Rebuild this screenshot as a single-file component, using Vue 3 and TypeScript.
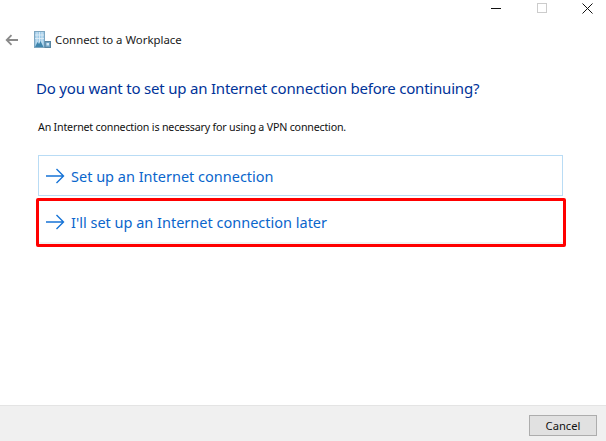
<script setup lang="ts">
const options = [
  { label: 'Set up an Internet connection', marked: false },
  { label: "I'll set up an Internet connection later", marked: true },
]
</script>

<template>
  <div class="window">
    <div class="controls">
      <span class="ctl"><i class="min"></i></span>
      <span class="ctl"><i class="max"></i></span>
      <span class="ctl">
        <svg width="11" height="11" viewBox="0 0 11 11"><path d="M.5.5l10 10M10.500.5l-10 10" stroke="#111" fill="none" /></svg>
      </span>
    </div>

    <div class="nav">
      <svg class="back" width="14" height="12" viewBox="0 0 14 12">
        <path d="M13 6H2M6.500 1.200 1.700 6l4.800 4.800" stroke="#8a8a8a" stroke-width="1.800" fill="none" />
      </svg>
      <svg class="app-icon" width="17" height="17" viewBox="0 0 17 17">
        <rect x="0.500" y="0.500" width="10" height="16" fill="#9fcbe8" stroke="#7ea6c0" />
        <path d="M3 1v15M5.500 1v15M8 1v15M1 4h9M1 7.500h9" stroke="#e4f0f8" stroke-width="0.800" />
        <path d="M1 16l2.500-5 1.500 2 1.500-3 3 6z" fill="#3f86ad" />
        <rect x="11" y="10.500" width="5.500" height="6" fill="#6fa3c4" stroke="#58849f" />
        <rect x="12.500" y="12" width="2.500" height="2.500" fill="#d6e8f4" />
      </svg>
      <span class="app-title">Connect to a Workplace</span>
    </div>

    <main class="body">
      <h1>Do you want to set up an Internet connection before continuing?</h1>
      <p>An Internet connection is necessary for using a VPN connection.</p>
      <div class="options">
        <div v-for="opt in options" :key="opt.label" class="option" :class="{ marked: opt.marked }">
          <svg class="arrow" width="19" height="16" viewBox="0 0 19 16">
            <path d="M0 8h17.500M10.500 1l7 7-7 7" stroke="#1673d6" stroke-width="1.400" fill="none" />
          </svg>
          <span>{{ opt.label }}</span>
        </div>
      </div>
    </main>

    <footer>
      <button type="button">Cancel</button>
    </footer>
  </div>
</template>

<style>
html, body { margin: 0; background: #fff; }
</style>

<style scoped>
.window {
  width: 606px;
  height: 441px;
  display: flex;
  flex-direction: column;
  background: #fff;
  font-family: "Noto Sans", "Open Sans", sans-serif;
  overflow: hidden;
}

.controls {
  height: 28px;
  display: flex;
  justify-content: flex-end;
  gap: 15.500px;
  box-sizing: border-box;
  padding: 3px 4px 0 0;
}
.ctl {
  width: 30px;
  height: 10px;
  display: flex;
  justify-content: center;
  align-items: center;
}
.ctl i { display: block; }
.min { width: 10px; height: 1px; background: #111; }
.max { width: 8px; height: 8px; border: 1px solid #ccc; }

.nav {
  height: 21px;
  margin-top: 1px;
  display: flex;
  align-items: center;
  padding-left: 5px;
}
.app-icon { margin-left: 15px; }
.app-title {
  margin-left: 4px;
  font-size: 11.400px;
  color: #1a1a1a;
}

.body {
  flex: 1;
  padding: 0 40px 0 36px;
}
h1 {
  margin: 27px 0 0;
  font-size: 15px;
  font-weight: 400;
  letter-spacing: -0.2px;
  line-height: 22px;
  color: #003399;
  white-space: nowrap;
}
p {
  margin: 20px 0 0 2px;
  font-size: 10.700px;
  letter-spacing: -0.2px;
  line-height: 16px;
  color: #111;
  white-space: nowrap;
}

.options {
  margin-top: 20px;
  display: flex;
  flex-direction: column;
  gap: 2px;
}
.option {
  position: relative;
  box-sizing: border-box;
  width: 525px;
  height: 41px;
  margin-left: 2px;
  display: flex;
  align-items: center;
  gap: 6px;
  padding: 1px 0 0 7px;
  border: 1px solid #b9dcf5;
  font-size: 14.500px;
  color: #0a66cc;
}
.arrow { flex: none; }
.option.marked {
  height: 49px;
  margin-left: 0;
  width: 530px;
  border: 3px solid #f00;
  border-radius: 2px;
  padding: 0 0 1px 7px;
  box-shadow: inset 0 -2px 0 #f2f2f2;
}

footer {
  height: 36px;
  box-sizing: border-box;
  background: #f0f0f0;
  border-top: 1px solid #e4e4e4;
  display: flex;
  justify-content: flex-end;
  align-items: flex-start;
  padding: 9px 9px 0 0;
}
button {
  width: 68px;
  height: 21px;
  padding: 0;
  background: #e1e1e1;
  border: 1px solid #adadad;
  font: 11.200px "Noto Sans", "Open Sans", sans-serif;
  color: #111;
}
</style>
